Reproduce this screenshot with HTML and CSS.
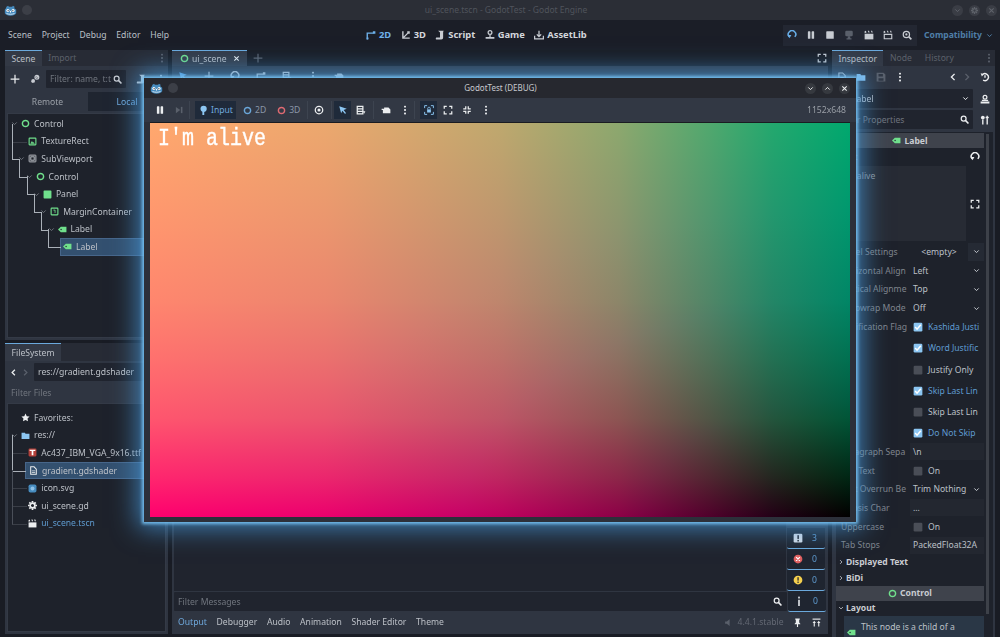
FILE: index.html
```html
<!DOCTYPE html>
<html lang="en">
<head>
    <meta charset="UTF-8">
    <title>ui_scene.tscn - GodotTest - Godot Engine</title>
    <link rel="stylesheet" href="styles.css">
</head>
<body>
<svg class="defs" width="0" height="0">
    <symbol id="godot" viewBox="0 0 16 16">
        <path fill="#478cbf" d="M3 3.500 5 2l1 1.500h4L11 2l2 1.500-.4 1.600L15 7v4.500c-1 1.500-3.500 3-7 3s-6-1.500-7-3V7l1.400-1.900z"/>
        <circle cx="4.800" cy="8" r="1.900" fill="#fff"/><circle cx="11.200" cy="8" r="1.900" fill="#fff"/>
        <circle cx="5.100" cy="8.200" r=".8" fill="#3a3f47"/><circle cx="10.900" cy="8.200" r=".8" fill="#3a3f47"/>
        <rect x="7.400" y="8.500" width="1.200" height="2" fill="#fff"/>
        <path fill="none" stroke="#fff" stroke-width=".9" d="M3 11.700c3 1.200 7 1.200 10 0"/>
    </symbol>
    <symbol id="ctrl" viewBox="0 0 16 16"><circle cx="8" cy="8" r="5.500" fill="none" stroke="currentColor" stroke-width="2.600"/></symbol>
    <symbol id="tex" viewBox="0 0 16 16"><rect x="2" y="2" width="12" height="12" rx="1" fill="none" stroke="currentColor" stroke-width="2"/><path fill="currentColor" d="M4 12l3-5 2 3 1-1 2 3z"/></symbol>
    <symbol id="subv" viewBox="0 0 16 16"><rect x="2" y="2" width="12" height="12" rx="1" fill="none" stroke="currentColor" stroke-width="1.600"/><rect x="5" y="5" width="6" height="6" fill="none" stroke="currentColor" stroke-width="1.600"/></symbol>
    <symbol id="panel" viewBox="0 0 16 16"><rect x="1" y="1" width="14" height="14" rx="1.500" fill="currentColor"/></symbol>
    <symbol id="margin" viewBox="0 0 16 16"><rect x="2" y="2" width="12" height="12" rx="1" fill="none" stroke="currentColor" stroke-width="2"/><path fill="none" stroke="currentColor" stroke-width="1.500" d="M6 5.500h3v5"/></symbol>
    <symbol id="tag" viewBox="0 0 16 16"><path fill="currentColor" d="M5 3h10v10H5L0 8z"/><circle cx="5.500" cy="8" r="1.300" fill="#232733"/></symbol>
    <symbol id="down" viewBox="0 0 16 16"><path fill="none" stroke="currentColor" stroke-width="2.200" d="M3 5.500l5 5 5-5"/></symbol>
    <symbol id="right" viewBox="0 0 16 16"><path fill="none" stroke="currentColor" stroke-width="2.200" d="M5.500 3l5 5-5 5"/></symbol>
    <symbol id="left" viewBox="0 0 16 16"><path fill="none" stroke="currentColor" stroke-width="2.200" d="M10.500 3l-5 5 5 5"/></symbol>
    <symbol id="up" viewBox="0 0 16 16"><path fill="none" stroke="currentColor" stroke-width="2.200" d="M3 10.500l5-5 5 5"/></symbol>
    <symbol id="x" viewBox="0 0 16 16"><path fill="none" stroke="currentColor" stroke-width="2.400" d="M3 3l10 10M13 3L3 13"/></symbol>
    <symbol id="plus" viewBox="0 0 16 16"><path fill="none" stroke="currentColor" stroke-width="2" d="M8 1v14M1 8h14"/></symbol>
    <symbol id="search" viewBox="0 0 16 16"><circle cx="6.500" cy="6.500" r="4.300" fill="none" stroke="currentColor" stroke-width="2.200"/><path stroke="currentColor" stroke-width="2.800" d="M10 10l5 5"/></symbol>
    <symbol id="dots" viewBox="0 0 16 16"><g fill="currentColor"><rect x="6.500" y="1" width="3" height="3" rx="1"/><rect x="6.500" y="6.500" width="3" height="3" rx="1"/><rect x="6.500" y="12" width="3" height="3" rx="1"/></g></symbol>
    <symbol id="link" viewBox="0 0 16 16"><path fill="none" stroke="currentColor" stroke-width="2.800" d="M3 13l3-3M10 6l3-3"/><circle cx="5" cy="11" r="3" fill="currentColor"/><circle cx="11" cy="5" r="3" fill="none" stroke="currentColor" stroke-width="2"/></symbol>
    <symbol id="scr" viewBox="0 0 16 16"><path fill="currentColor" d="M5 1h9c-1 1-1 2-1 3v8c0 2-1 3-3 3H2c-1 0-1-2 0-3h6V4c0-1-2-2-3-3z"/></symbol>
    <symbol id="fit" viewBox="0 0 16 16"><path fill="none" stroke="currentColor" stroke-width="2" d="M2 6V2h4M10 2h4v4M14 10v4h-4M6 14H2v-4"/></symbol>
    <symbol id="fit2" viewBox="0 0 16 16"><path fill="none" stroke="currentColor" stroke-width="2" d="M6 2v4H2M10 2v4h4M14 10h-4v4M2 10h4v4"/></symbol>
    <symbol id="reload" viewBox="0 0 16 16"><path fill="none" stroke="currentColor" stroke-width="2.400" d="M3.500 11a6 6 0 1 1 9 0"/><path fill="currentColor" d="M1 8h6l-3 5z"/></symbol>
    <symbol id="pause" viewBox="0 0 16 16"><rect x="3" y="2" width="4" height="12" rx="1" fill="currentColor"/><rect x="9" y="2" width="4" height="12" rx="1" fill="currentColor"/></symbol>
    <symbol id="step" viewBox="0 0 16 16"><path fill="currentColor" d="M3 3l7 5-7 5z"/><rect x="11" y="3" width="2.500" height="10" fill="currentColor"/></symbol>
    <symbol id="stop" viewBox="0 0 16 16"><rect x="2" y="2" width="12" height="12" rx="1" fill="currentColor"/></symbol>
    <symbol id="remote" viewBox="0 0 16 16"><rect x="2" y="1" width="12" height="9" rx="2" fill="currentColor"/><path fill="currentColor" d="M6 10h4v3h2v2H4v-2h2z"/></symbol>
    <symbol id="clap" viewBox="0 0 16 16"><path fill="currentColor" d="M1 6h14v9H1z"/><path fill="currentColor" d="M1 2l2-1 1 3-3 1zM6 1h2l1 3H7zM11 1h2l1 3h-2z"/></symbol>
    <symbol id="clapo" viewBox="0 0 16 16"><path fill="none" stroke="currentColor" stroke-width="1.800" d="M2 7h12v7H2z"/><path fill="currentColor" d="M1 2l2-1 1 3-3 1zM6 1h2l1 3H7zM11 1h2l1 3h-2z"/></symbol>
    <symbol id="movie" viewBox="0 0 16 16"><circle cx="7" cy="7" r="5" fill="none" stroke="currentColor" stroke-width="2"/><circle cx="7" cy="7" r="1.800" fill="currentColor"/><path stroke="currentColor" stroke-width="2.500" d="M11 11l4 4"/></symbol>
    <symbol id="game" viewBox="0 0 16 16"><circle cx="8" cy="4" r="3" fill="none" stroke="currentColor" stroke-width="2"/><path fill="currentColor" d="M7 7h2v4h6v3H1v-3h6z"/></symbol>
    <symbol id="asset" viewBox="0 0 16 16"><path fill="none" stroke="currentColor" stroke-width="2" d="M1 9v5h14V9M8 1v9M4.500 7L8 10.500 11.500 7"/></symbol>
    <symbol id="two" viewBox="0 0 16 16"><path fill="none" stroke="currentColor" stroke-width="2.200" d="M2 15V5h10"/><rect x="11" y="2" width="4" height="4" fill="currentColor"/><rect x="1" y="12" width="3" height="3" fill="currentColor"/></symbol>
    <symbol id="three" viewBox="0 0 16 16"><path fill="none" stroke="currentColor" stroke-width="2.200" d="M3 2v11h11M3 13l8-8"/><rect x="10" y="2" width="4" height="4" fill="currentColor"/></symbol>
    <symbol id="star" viewBox="0 0 16 16"><path fill="currentColor" d="M8 1l2.200 4.600 5 .7-3.600 3.500.9 5L8 12.400 3.500 14.800l.9-5L.8 6.300l5-.7z"/></symbol>
    <symbol id="folder" viewBox="0 0 16 16"><path fill="currentColor" d="M1 3h6l1 2h7v9H1z"/></symbol>
    <symbol id="file" viewBox="0 0 16 16"><path fill="none" stroke="currentColor" stroke-width="1.800" d="M3 1.500h6l4 4v9H3z"/><path fill="currentColor" d="M5 8h6v1.500H5zM5 11h6v1.500H5z"/></symbol>
    <symbol id="gear" viewBox="0 0 16 16"><circle cx="8" cy="8" r="4.200" fill="none" stroke="currentColor" stroke-width="3"/><path stroke="currentColor" stroke-width="3" d="M8 0v3M8 13v3M0 8h3M13 8h3M2.300 2.300l2 2M11.700 11.700l2 2M13.700 2.300l-2 2M4.300 11.700l-2 2"/></symbol>
    <symbol id="font" viewBox="0 0 16 16"><rect x="1" y="1" width="14" height="14" rx="2" fill="#b3403a"/><path fill="#fff" d="M3 3h10v2.500H9.500V13h-3V5.500H3z"/></symbol>
    <symbol id="svgi" viewBox="0 0 16 16"><rect x="1" y="1" width="14" height="14" rx="3" fill="#478cbf"/><circle cx="8" cy="8" r="3.500" fill="#8ec1e8"/></symbol>
    <symbol id="save" viewBox="0 0 16 16"><path fill="currentColor" d="M1 1h11l3 3v11H1zM4 3v4h7V3zM4 10v4h8v-4z"/></symbol>
    <symbol id="hist" viewBox="0 0 16 16"><path fill="none" stroke="currentColor" stroke-width="2.200" d="M3.500 5a5.500 5.500 0 1 1 1.500 8M8 5v4"/><path fill="currentColor" d="M1 2l5 1-3 4z"/></symbol>
    <symbol id="docs" viewBox="0 0 16 16"><circle cx="8" cy="5" r="3" fill="none" stroke="currentColor" stroke-width="2"/><path fill="currentColor" d="M3 9h10v2H3zM1 12h14v3H1z"/></symbol>
    <symbol id="tools" viewBox="0 0 16 16"><path fill="none" stroke="currentColor" stroke-width="2.200" d="M4.500 7v8M11.500 1v14"/><circle cx="4.500" cy="4" r="3" fill="currentColor"/><path stroke="currentColor" stroke-width="2.200" d="M9 4h5"/></symbol>
    <symbol id="check" viewBox="0 0 16 16"><rect x="1" y="1" width="14" height="14" rx="2" fill="#8cc6f2"/><path fill="none" stroke="#fff" stroke-width="2.400" d="M3.500 8l3 3.500 6-7"/></symbol>
    <symbol id="box" viewBox="0 0 16 16"><rect x="1" y="1" width="14" height="14" rx="2" fill="#4a4e57"/></symbol>
    <symbol id="eye" viewBox="0 0 16 16"><circle cx="8" cy="8" r="6" fill="none" stroke="currentColor" stroke-width="2"/><circle cx="8" cy="8" r="2.500" fill="currentColor"/></symbol>
    <symbol id="cursor" viewBox="0 0 16 16"><path fill="currentColor" d="M2 2l12 4-5 2 4 5-2 1-4-5-2 4z"/></symbol>
    <symbol id="list" viewBox="0 0 16 16"><path fill="none" stroke="currentColor" stroke-width="2" d="M2 2h9v12H2zM2 6h9M2 10h9"/><path fill="currentColor" d="M11 10h4l-2 4z"/></symbol>
    <symbol id="cam" viewBox="0 0 16 16"><path fill="currentColor" d="M5 4h7l3 3v6H3V8H1V6h4z"/></symbol>
    <symbol id="lock" viewBox="0 0 16 16"><path fill="none" stroke="currentColor" stroke-width="1.500" d="M1 5V1h4M11 1h4v4M15 11v4h-4M5 15H1v-4"/><rect x="5" y="7" width="6" height="5" fill="currentColor"/><path fill="none" stroke="currentColor" stroke-width="1.300" d="M6 7V5c0-2 4-2 4 0v2"/></symbol>
    <symbol id="input" viewBox="0 0 16 16"><circle cx="9" cy="6" r="5" fill="currentColor"/><path fill="currentColor" d="M7 10h3v6H7z"/></symbol>
    <symbol id="warnb" viewBox="0 0 16 16"><rect x="1" y="1" width="14" height="14" rx="2" fill="#d5dde8"/><rect x="7" y="3.500" width="2.500" height="6" fill="#2a2e37"/><rect x="7" y="11" width="2.500" height="2.500" fill="#2a2e37"/></symbol>
    <symbol id="err" viewBox="0 0 16 16"><circle cx="8" cy="8" r="7" fill="#e06060"/><path stroke="#fff" stroke-width="2" d="M5 5l6 6M11 5l-6 6"/></symbol>
    <symbol id="warn" viewBox="0 0 16 16"><circle cx="8" cy="8" r="7" fill="#f5d04e"/><rect x="7" y="3.500" width="2.200" height="5.500" fill="#333"/><rect x="7" y="10.500" width="2.200" height="2.200" fill="#333"/></symbol>
    <symbol id="info" viewBox="0 0 16 16"><rect x="6.500" y="1" width="3" height="3" fill="currentColor"/><path fill="currentColor" d="M6.500 6h3v10h-3z"/></symbol>
    <symbol id="pin" viewBox="0 0 16 16"><path fill="currentColor" d="M4 1h8v2h-1v5l2 2v1H9v5H7v-5H3v-1l2-2V3H4z"/></symbol>
    <symbol id="expand" viewBox="0 0 16 16"><path fill="currentColor" d="M1 1h14v2H1z"/><path fill="currentColor" d="M4 5l3 4H5v6H3V9H1zM12 5l3 4h-2v6h-2V9H9z"/></symbol>
    <symbol id="speaker" viewBox="0 0 16 16"><path fill="currentColor" d="M2 6h3l5-4v12l-5-4H2z"/></symbol>
</svg>

<div class="titlebar">
    <svg class="logo"><use href="#godot"/></svg>
    <span class="pin-dot"></span>
    <span class="titlebar-text">ui_scene.tscn - GodotTest - Godot Engine</span>
    <div class="win-btns">
        <span class="win-btn"><svg class="ic-xs"><use href="#down"/></svg></span>
        <span class="win-btn"><svg class="ic-xs"><use href="#gear"/></svg></span>
        <span class="win-btn"><svg class="ic-xs"><use href="#x"/></svg></span>
    </div>
</div>

<div class="menubar">
    <div class="menu">
        <span>Scene</span><span>Project</span><span>Debug</span><span>Editor</span><span>Help</span>
    </div>
    <div class="screens">
        <span class="screen active"><svg class="ic"><use href="#two"/></svg>2D</span>
        <span class="screen"><svg class="ic"><use href="#three"/></svg>3D</span>
        <span class="screen"><svg class="ic"><use href="#scr"/></svg>Script</span>
        <span class="screen"><svg class="ic"><use href="#game"/></svg>Game</span>
        <span class="screen"><svg class="ic"><use href="#asset"/></svg>AssetLib</span>
    </div>
    <div class="runbar">
        <svg class="ic blue"><use href="#reload"/></svg>
        <svg class="ic"><use href="#pause"/></svg>
        <svg class="ic"><use href="#stop"/></svg>
        <svg class="ic off"><use href="#remote"/></svg>
        <svg class="ic"><use href="#clap"/></svg>
        <svg class="ic"><use href="#clapo"/></svg>
        <svg class="ic"><use href="#movie"/></svg>
    </div>
    <span class="renderer">Compatibility<svg class="ic-xs"><use href="#down"/></svg></span>
</div>

<div class="main">
    <div class="dock">
        <div class="tabs">
            <span class="tab active">Scene</span><span class="tab">Import</span>
            <svg class="ic tabs-end off"><use href="#dots"/></svg>
        </div>
        <div class="dock-body scene-dock">
            <div class="scene-tools">
                <svg class="ic white"><use href="#plus"/></svg>
                <svg class="ic"><use href="#link"/></svg>
                <div class="field scene-filter"><span class="hint">Filter: name, t:t</span><svg class="ic-s"><use href="#search"/></svg></div>
                <svg class="ic"><use href="#scr"/></svg>
                <svg class="ic"><use href="#dots"/></svg>
            </div>
            <div class="remote-local">
                <span>Remote</span><span class="on">Local</span>
            </div>
            <div class="tree">
                <div class="row d0"><svg class="arrow"><use href="#down"/></svg><svg class="ic-t green"><use href="#ctrl"/></svg>Control</div>
                <div class="row d1 stub trunk"><span class="arrow"></span><svg class="ic-t green"><use href="#tex"/></svg>TextureRect</div>
                <div class="row d1 elbow"><svg class="arrow"><use href="#down"/></svg><svg class="ic-t"><use href="#subv"/></svg>SubViewport</div>
                <div class="row d2 elbow"><svg class="arrow"><use href="#down"/></svg><svg class="ic-t green"><use href="#ctrl"/></svg>Control</div>
                <div class="row d3 elbow"><svg class="arrow"><use href="#down"/></svg><svg class="ic-t green"><use href="#panel"/></svg>Panel</div>
                <div class="row d4 elbow"><svg class="arrow"><use href="#down"/></svg><svg class="ic-t green"><use href="#margin"/></svg>MarginContainer</div>
                <div class="row d5 elbow"><svg class="arrow"><use href="#down"/></svg><svg class="ic-t green"><use href="#tag"/></svg>Label</div>
                <div class="row d6 elbow sel"><svg class="ic-t green"><use href="#tag"/></svg>Label</div>
            </div>
        </div>
        <div class="tabs fs-tabs">
            <span class="tab active">FileSystem</span>
        </div>
        <div class="dock-body fs-dock">
            <div class="path-row">
                <svg class="ic-s white"><use href="#left"/></svg>
                <svg class="ic-s off"><use href="#right"/></svg>
                <div class="field path">res://gradient.gdshader</div>
            </div>
            <div class="fs-filter"><span class="hint">Filter Files</span><svg class="ic-s"><use href="#search"/></svg></div>
            <div class="tree fs-tree">
                <div class="row d0"><span class="arrow"></span><svg class="ic-t white"><use href="#star"/></svg>Favorites:</div>
                <div class="row d0"><svg class="arrow"><use href="#down"/></svg><svg class="ic-t sky"><use href="#folder"/></svg>res://</div>
                <div class="row d1 stub trunk"><span class="arrow"></span><svg class="ic-t"><use href="#font"/></svg>Ac437_IBM_VGA_9x16.ttf</div>
                <div class="row d1 elbow selfs"><span class="arrow"></span><svg class="ic-t white"><use href="#file"/></svg>gradient.gdshader</div>
                <div class="row d1 stub"><span class="arrow"></span><svg class="ic-t"><use href="#svgi"/></svg>icon.svg</div>
                <div class="row d1 stub"><span class="arrow"></span><svg class="ic-t white"><use href="#gear"/></svg>ui_scene.gd</div>
                <div class="row d1 stub link-row"><span class="arrow"></span><svg class="ic-t white"><use href="#clap"/></svg>ui_scene.tscn</div>
            </div>
        </div>
    </div>

    <div class="center">
        <div class="tabs center-tabs">
            <span class="tab active doc-tab"><svg class="ic-t green"><use href="#ctrl"/></svg>ui_scene<svg class="ic-xs white"><use href="#x"/></svg></span>
            <svg class="ic off add-tab"><use href="#plus"/></svg>
            <svg class="ic tabs-end"><use href="#fit"/></svg>
        </div>
        <div class="viewport-tools">
            <svg class="ic blue"><use href="#cursor"/></svg>
            <svg class="ic"><use href="#plus"/></svg>
            <svg class="ic"><use href="#reload"/></svg>
            <svg class="ic"><use href="#two"/></svg>
            <svg class="ic"><use href="#list"/></svg>
            <svg class="ic"><use href="#dots"/></svg>
            <svg class="ic"><use href="#cam"/></svg>
        </div>
        <div class="viewport"></div>
        <div class="bottom">
            <div class="output">
                <div class="log"></div>
                <div class="badges">
                    <span class="badge"><svg class="ic"><use href="#warnb"/></svg>3</span>
                    <span class="badge"><svg class="ic"><use href="#err"/></svg>0</span>
                    <span class="badge"><svg class="ic"><use href="#warn"/></svg>0</span>
                </div>
            </div>
            <div class="msg-row">
                <div class="field msg-filter"><span class="hint">Filter Messages</span><svg class="ic-s white"><use href="#search"/></svg></div>
                <span class="badge"><svg class="ic"><use href="#info"/></svg>0</span>
            </div>
            <div class="bottom-tabs">
                <span class="on">Output</span><span>Debugger</span><span>Audio</span><span>Animation</span><span>Shader Editor</span><span>Theme</span>
                <span class="version"><svg class="ic-s off"><use href="#speaker"/></svg>4.4.1.stable</span>
                <svg class="ic-s white"><use href="#pin"/></svg>
                <svg class="ic-s white"><use href="#expand"/></svg>
            </div>
        </div>
    </div>

    <div class="dock right-dock">
        <div class="tabs">
            <span class="tab active">Inspector</span><span class="tab">Node</span><span class="tab">History</span>
            <svg class="ic tabs-end off"><use href="#dots"/></svg>
        </div>
        <div class="dock-body inspector">
            <div class="insp-tools">
                <svg class="ic"><use href="#file"/></svg>
                <svg class="ic sky"><use href="#folder"/></svg>
                <svg class="ic off"><use href="#save"/></svg>
                <svg class="ic white"><use href="#dots"/></svg>
                <span class="nav">
                    <svg class="ic white"><use href="#left"/></svg>
                    <svg class="ic off"><use href="#right"/></svg>
                </span>
                <svg class="ic white"><use href="#hist"/></svg>
            </div>
            <div class="insp-line">
                <div class="field insp-field"><svg class="ic-t green"><use href="#tag"/></svg><span>Label</span><svg class="ic-xs white"><use href="#down"/></svg></div>
                <svg class="ic white"><use href="#docs"/></svg>
            </div>
            <div class="insp-line">
                <div class="field insp-field"><span class="hint">Filter Properties</span><svg class="ic-s white"><use href="#search"/></svg></div>
                <svg class="ic white"><use href="#tools"/></svg>
            </div>
            <div class="props">
                <div class="props-list">
                    <div class="class-head"><svg class="ic-t green"><use href="#tag"/></svg>Label</div>
                    <div class="prop-text">
                        <div class="prop-text-head"><span>Text</span><svg class="ic white"><use href="#reload"/></svg></div>
                        <div class="prop-text-body"><div class="textarea">I'm alive</div><svg class="ic white"><use href="#fit"/></svg></div>
                    </div>
                    <div class="prop"><span class="key">Label Settings</span><span class="val res">&lt;empty&gt;</span><span class="res-arrow"><svg class="ic-xs"><use href="#down"/></svg></span></div>
                    <div class="prop"><span class="key">Horizontal Align</span><span class="val">Left<svg class="ic-xs"><use href="#down"/></svg></span></div>
                    <div class="prop"><span class="key">Vertical Alignme</span><span class="val">Top<svg class="ic-xs"><use href="#down"/></svg></span></div>
                    <div class="prop"><span class="key">Autowrap Mode</span><span class="val">Off<svg class="ic-xs"><use href="#down"/></svg></span></div>
                    <div class="flags">
                        <div class="prop flag"><span class="key">Justification Flag</span><span class="val on"><svg class="ic-c"><use href="#check"/></svg>Kashida Justi</span></div>
                        <div class="prop flag"><span class="key"></span><span class="val on"><svg class="ic-c"><use href="#check"/></svg>Word Justific</span></div>
                        <div class="prop flag"><span class="key"></span><span class="val"><svg class="ic-c"><use href="#box"/></svg>Justify Only</span></div>
                        <div class="prop flag"><span class="key"></span><span class="val on"><svg class="ic-c"><use href="#check"/></svg>Skip Last Lin</span></div>
                        <div class="prop flag"><span class="key"></span><span class="val"><svg class="ic-c"><use href="#box"/></svg>Skip Last Lin</span></div>
                        <div class="prop flag"><span class="key"></span><span class="val on"><svg class="ic-c"><use href="#check"/></svg>Do Not Skip</span></div>
                    </div>
                    <div class="prop"><span class="key">Paragraph Sepa</span><span class="val inputish">\n</span></div>
                    <div class="prop"><span class="key">Clip Text</span><span class="val"><svg class="ic-c"><use href="#box"/></svg>On</span></div>
                    <div class="prop"><span class="key">Text Overrun Be</span><span class="val">Trim Nothing<svg class="ic-xs"><use href="#down"/></svg></span></div>
                    <div class="prop"><span class="key">Ellipsis Char</span><span class="val inputish">...</span></div>
                    <div class="prop"><span class="key">Uppercase</span><span class="val"><svg class="ic-c"><use href="#box"/></svg>On</span></div>
                    <div class="prop"><span class="key">Tab Stops</span><span class="val inputish">PackedFloat32A</span></div>
                    <div class="section"><svg class="ic-a"><use href="#right"/></svg>Displayed Text</div>
                    <div class="section"><svg class="ic-a"><use href="#right"/></svg>BiDi</div>
                    <div class="class-head"><svg class="ic-t green"><use href="#ctrl"/></svg>Control</div>
                    <div class="section"><svg class="ic-a"><use href="#down"/></svg>Layout</div>
                    <div class="note"><svg class="ic-t green"><use href="#tag"/></svg>This node is a child of a</div>
                </div>
                <div class="scroll"><div class="thumb"></div></div>
            </div>
        </div>
    </div>
</div>

<!-- running game window, floats over the editor -->
<div class="game-win">
    <div class="game-title">
        <svg class="logo"><use href="#godot"/></svg>
        <span class="pin-dot"></span>
        <span class="game-name">GodotTest (DEBUG)</span>
        <div class="win-btns">
            <span class="win-btn"><svg class="ic-xs"><use href="#down"/></svg></span>
            <span class="win-btn"><svg class="ic-xs"><use href="#up"/></svg></span>
            <span class="win-btn"><svg class="ic-xs"><use href="#x"/></svg></span>
        </div>
    </div>
    <div class="game-tools">
        <div class="tgroup g-run">
            <svg class="ic white"><use href="#pause"/></svg>
            <svg class="ic off"><use href="#step"/></svg>
        </div>
        <div class="tgroup g-input">
            <span class="gbtn pressed input-btn"><svg class="ic sky"><use href="#input"/></svg>Input</span>
            <span class="gbtn"><svg class="ic-s cblue"><use href="#ctrl"/></svg>2D</span>
            <span class="gbtn g3d"><svg class="ic-s cred"><use href="#ctrl"/></svg>3D</span>
        </div>
        <div class="tgroup g-eye">
            <svg class="ic white"><use href="#eye"/></svg>
        </div>
        <div class="tgroup g-select">
            <span class="gbtn pressed square"><svg class="ic sky"><use href="#cursor"/></svg></span>
            <svg class="ic white"><use href="#list"/></svg>
        </div>
        <div class="tgroup g-cam">
            <svg class="ic white"><use href="#cam"/></svg>
            <svg class="ic white"><use href="#dots"/></svg>
        </div>
        <div class="tgroup g-view">
            <span class="gbtn pressed square"><svg class="ic sky"><use href="#lock"/></svg></span>
            <svg class="ic white"><use href="#fit"/></svg>
            <svg class="ic white"><use href="#fit2"/></svg>
            <svg class="ic white"><use href="#dots"/></svg>
        </div>
        <span class="res-label">1152x648</span>
    </div>
    <div class="game-view"><span class="alive">I'm alive</span></div>
</div>
</body>
</html>
```

FILE: styles.css
```css
* {
    box-sizing: border-box;
}

html, body {
    margin: 0;
    height: 637px;
    overflow: hidden;
}

body {
    background-color: #191c24;
    color: #bcc0c7;
    font-family: "Noto Sans", sans-serif;
    font-size: 8.6px;
    line-height: 12px;
    filter: blur(0.35px);
}

.defs {
    position: absolute;
}

svg {
    flex: none;
    color: #c8ccd2;
}

.ic { width: 10px; height: 10px; }
.ic-s { width: 9px; height: 9px; }
.ic-xs { width: 7px; height: 7px; }
.ic-t { width: 9px; height: 9px; }
.ic-a { width: 6px; height: 6px; }
.ic-c { width: 10px; height: 10px; }

.white { color: #eceef0; }
.off { color: #5a606b; }
.blue { color: #68aee8; }
.sky { color: #8cc6f2; }
.green { color: #70e08c; }
.cblue { color: #6aa6d8; }
.cred { color: #e06a72; }

.hint { color: #70757e; }

/* window title */
.titlebar {
    height: 20px;
    background-color: #2b2e36;
    display: flex;
    align-items: center;
    padding: 0 3px 0 4px;
}

.logo {
    width: 13px;
    height: 13px;
}

.pin-dot {
    width: 10px;
    height: 10px;
    border-radius: 50%;
    background-color: #3c3f47;
    margin-left: 5px;
}

.titlebar-text {
    flex: 1;
    text-align: center;
    color: #50545c;
    font-size: 8.5px;
    padding-left: 28px;
}

.win-btns {
    display: flex;
    gap: 6px;
}

.win-btn {
    width: 11px;
    height: 11px;
    border-radius: 50%;
    background-color: #3a3d45;
    display: flex;
    align-items: center;
    justify-content: center;
}

.titlebar .win-btn svg {
    color: #5f636b;
}

/* main menu */
.menubar {
    height: 30px;
    background-color: #1b1e27;
    display: flex;
    align-items: center;
    padding-left: 8px;
    padding-right: 7px;
}

.menu {
    display: flex;
    gap: 9.800px;
    width: 358px;
}

.screens {
    display: flex;
    gap: 9.400px;
    font-size: 9.4px;
    font-weight: 700;
    color: #d4d7dc;
    width: 417px;
}

.screen {
    display: flex;
    align-items: center;
    gap: 3px;
}

.screen.active,
.screen.active svg {
    color: #6fb1ea;
}

.runbar {
    width: 134px;
    height: 21px;
    background-color: #232732;
    display: flex;
    align-items: center;
    justify-content: space-between;
    padding: 0 5px 0 4px;
}

.renderer {
    flex: 1;
    display: flex;
    align-items: center;
    justify-content: space-between;
    margin-left: 7px;
    font-weight: 700;
    color: #4f7fa8;
}

.renderer svg {
    color: #4f7fa8;
}

/* docks */
.main {
    height: 587px;
    padding: 0 5px 3px;
    display: flex;
    gap: 4px;
}

.dock {
    width: 163px;
    display: flex;
    flex-direction: column;
}

.center {
    flex: 1;
    display: flex;
    flex-direction: column;
}

.tabs {
    height: 16px;
    background-color: #272b35;
    display: flex;
    align-items: stretch;
    flex: none;
}

.tab {
    padding: 0 6.500px;
    color: #5c616b;
    display: flex;
    align-items: center;
}

.tab.active {
    background-color: #333945;
    border-top: 1px solid #6ba9dc;
    color: #bcc0c7;
}

.tabs-end {
    margin-left: auto;
    align-self: center;
    margin-right: 1px;
}

.dock-body {
    background-color: #2f3541;
    padding: 2px;
}

.scene-dock {
    height: 274px;
    display: flex;
    flex-direction: column;
}

.scene-tools {
    height: 22px;
    padding-left: 3px;
    display: flex;
    align-items: center;
    gap: 10px;
    flex: none;
}

.field {
    background-color: #20242e;
    border-radius: 1px;
    display: flex;
    align-items: center;
}

.scene-filter {
    width: 81px;
    height: 18px;
    margin-left: -4px;
    padding: 0 4px;
    justify-content: space-between;
    overflow: hidden;
    white-space: nowrap;
}

.remote-local {
    display: flex;
    height: 19px;
    flex: none;
    margin-top: 2px;
}

.remote-local span {
    width: 81px;
    display: flex;
    align-items: center;
    justify-content: center;
    color: #9ba0a8;
}

.remote-local .on {
    width: 78px;
    background-color: #1f2530;
    color: #6fa8dc;
}

.tree {
    flex: 1;
    background-color: #1e222b;
    border: 1px solid #343a46;
    margin-top: 2px;
    padding-top: 1px;
}

.row {
    height: 17.600px;
    display: flex;
    align-items: center;
    gap: 4px;
    white-space: nowrap;
    position: relative;
}

.arrow {
    width: 7px;
    height: 7px;
    color: #6d727b;
    margin-right: -1px;
    flex: none;
}

.d0 { padding-left: 3px; }
.d1 { padding-left: 10.300px; }
.d2 { padding-left: 17.600px; }
.d3 { padding-left: 24.900px; }
.d4 { padding-left: 32.200px; }
.d5 { padding-left: 39.500px; }
.d6 { padding-left: 54px; }

/* tree guide lines */
.elbow::before,
.stub::before {
    content: "";
    position: absolute;
    width: 7px;
    left: 4px;
    top: -9px;
    height: 18px;
    border-left: 1px solid #aab0b8;
    border-bottom: 1px solid #aab0b8;
}

.stub::before {
    border-left-color: #4a4f59;
    border-bottom-color: #3a3e47;
    width: 14px;
}

.trunk::before {
    border-left-color: #aab0b8;
}

.d2::before { left: 11.300px; }
.d3::before { left: 18.600px; }
.d4::before { left: 25.900px; }
.d5::before { left: 33.200px; }

.sel, .selfs {
    background-color: #33506f;
    box-shadow: inset 0 0 0 1px #47668a;
}

.d6.sel {
    margin-left: 52px;
    padding-left: 3px;
}

.d6.sel::before {
    left: -12px;
    width: 12px;
}

.selfs {
    margin-left: 17px;
    padding-left: 4px;
}

.selfs .arrow {
    display: none;
}

.selfs::before {
    left: -13px;
    width: 13px;
}

.link-row {
    color: #5f9bd0;
}

.fs-tabs {
    margin-top: 3px;
    height: 18px;
}

.fs-dock {
    flex: 1;
    display: flex;
    flex-direction: column;
}

.path-row {
    height: 18px;
    display: flex;
    align-items: center;
    gap: 3px;
    padding-left: 2px;
    flex: none;
}

.path {
    flex: 1;
    height: 18px;
    padding-left: 4px;
    margin-left: 1px;
}

.fs-filter {
    height: 19px;
    margin-top: 2px;
    padding: 0 4px;
    display: flex;
    align-items: center;
    justify-content: space-between;
    flex: none;
}

.fs-tree {
    margin-top: 1px;
    padding-top: 5px;
}

.center-tabs {
    background: none;
}

.doc-tab {
    width: 75px;
    gap: 3px;
    padding: 0 7px 0 8px;
}

.doc-tab svg:last-child {
    margin-left: auto;
}

.add-tab {
    align-self: center;
    margin-left: 6px;
}

.viewport-tools {
    height: 20px;
    background-color: #2f3541;
    display: flex;
    align-items: center;
    gap: 16px;
    padding-left: 6px;
    flex: none;
}

.viewport {
    flex: 1;
    background-color: #2a2d34;
}

.bottom {
    height: 140px;
    background-color: #2f3541;
    display: flex;
    flex-direction: column;
    padding: 2px;
}

.output {
    flex: 1;
    display: flex;
}

.log {
    flex: 1;
    background-color: #20242e;
}

.badges {
    width: 40px;
    padding-left: 1px;
    display: flex;
    flex-direction: column;
    justify-content: flex-end;
}

.badge {
    width: 38px;
    height: 21px;
    border-bottom: 1px solid #6ba9dc;
    border-radius: 0 0 2px 2px;
    background-color: #1f2530;
    color: #5f9bd0;
    display: flex;
    align-items: center;
    gap: 9px;
    padding-left: 6px;
    flex: none;
}

.msg-row {
    height: 21px;
    display: flex;
    gap: 1px;
    flex: none;
}

.msg-filter {
    flex: 1;
    height: 19px;
    margin-top: 1px;
    padding: 0 5px 0 4px;
    justify-content: space-between;
}

.bottom-tabs {
    height: 20px;
    display: flex;
    align-items: center;
    gap: 9.700px;
    padding: 0 5px 0 4px;
    flex: none;
}

.bottom-tabs .on {
    color: #6fa8dc;
}

.version {
    margin-left: auto;
    color: #636873;
    display: flex;
    align-items: center;
    gap: 5px;
}

/* inspector */
.inspector {
    flex: 1;
    display: flex;
    flex-direction: column;
    padding: 0 2px 0 4px;
}

.insp-tools {
    height: 22px;
    display: flex;
    align-items: center;
    gap: 9.300px;
    padding: 0 3px 0 1px;
    flex: none;
}

.nav {
    margin-left: auto;
    display: flex;
    gap: 4px;
    margin-right: -1px;
}

.insp-line {
    height: 21px;
    display: flex;
    align-items: center;
    gap: 7px;
    flex: none;
}

.insp-field {
    width: 137px;
    height: 19px;
    padding: 0 4px;
    gap: 3px;
}

.insp-field :last-child {
    margin-left: auto;
}

.props {
    flex: 1;
    display: flex;
    background-color: #1e222b;
    margin-top: 2px;
    padding: 1px 3px 0 0;
    overflow: hidden;
}

.props-list {
    width: 148px;
}

.class-head {
    height: 15px;
    background-color: #3f434c;
    font-weight: 700;
    color: #c9ccd1;
    display: flex;
    align-items: center;
    justify-content: center;
    gap: 3px;
}

.prop-text {
    height: 94.650px;
}

.prop-text-head {
    height: 18px;
    display: flex;
    align-items: center;
    justify-content: space-between;
    padding: 0 4px 0 5px;
    color: #8a8f97;
}

.prop-text-body {
    display: flex;
    align-items: center;
    gap: 4px;
    padding-left: 2px;
}

.textarea {
    width: 128px;
    height: 75px;
    background-color: #272b34;
    padding: 4px 0 0 4px;
    color: #8f949c;
}

.prop {
    height: 18.700px;
    display: flex;
    align-items: center;
}

.flags {
    margin: -1.100px 0 -1.500px;
}

.flag {
    height: 21.300px;
}

.key {
    width: 74px;
    padding-left: 5px;
    color: #80858d;
    white-space: nowrap;
    overflow: hidden;
}

.val {
    flex: 1;
    height: 100%;
    display: flex;
    align-items: center;
    gap: 5px;
    padding-left: 3px;
    white-space: nowrap;
}

.val > .ic-xs {
    margin-left: auto;
    margin-right: 4px;
}

.val.on {
    color: #5f9bd0;
}

.inputish {
    background-color: #232730;
    margin: 1px 0;
    height: 17px;
}

.res {
    justify-content: center;
    padding-left: 0;
}

.res-arrow {
    width: 16px;
    height: 100%;
    background-color: #252a34;
    display: flex;
    align-items: center;
    justify-content: center;
}

.section {
    height: 15.500px;
    display: flex;
    align-items: center;
    gap: 2px;
    padding-left: 2px;
    font-weight: 700;
    color: #c9ccd1;
}

.note {
    height: 30px;
    margin-left: 8px;
    background-color: #2a3746;
    display: flex;
    gap: 5px;
    padding: 5px 0 0 3px;
    white-space: nowrap;
    overflow: hidden;
}

.note svg {
    margin-top: 7px;
}

.scroll {
    flex: 1;
    padding: 1px 1px 0 2px;
}

.thumb {
    width: 3px;
    height: 480px;
    background-color: #3d4149;
}

/* game window */
.game-win {
    position: absolute;
    left: 144px;
    top: 78px;
    width: 712px;
    height: 444px;
    background-color: #2c303a;
    display: flex;
    flex-direction: column;
    box-shadow: 0 0 3px 2px rgba(120, 195, 245, 0.9), 0 0 24px 6px rgba(70, 150, 215, 0.8);
}

.game-title {
    height: 20px;
    background-color: #26282f;
    display: flex;
    align-items: center;
    padding: 0 6px;
    flex: none;
}

.game-name {
    flex: 1;
    text-align: center;
    font-size: 8px;
    padding-left: 18px;
    color: #c6c9ce;
}

.game-title .win-btn {
    background-color: #36393f;
}

.game-title .win-btn svg {
    color: #eceef0;
}

.game-tools {
    height: 24px;
    background-color: #323844;
    display: flex;
    align-items: center;
    padding: 0 10px 0 11px;
    flex: none;
}

.tgroup {
    height: 18px;
    display: flex;
    align-items: center;
    border-right: 1px solid #3d4450;
}

.g-run { gap: 9px; padding-right: 5px; }
.g-input { gap: 7px; padding: 0 7px 0 5px; }
.g-eye { padding: 0 7px 0 6px; }
.g-select { gap: 5px; padding: 0 7px 0 2px; }
.g-cam { gap: 9px; padding: 0 4px 0 7px; }
.g-view { gap: 9px; padding-left: 5px; border-right: none; }

.g-view .square {
    margin-right: -3px;
}

.gbtn {
    height: 18px;
    display: flex;
    align-items: center;
    gap: 3px;
    color: #8b97a8;
}

.g3d {
    margin-left: 4px;
}

.pressed {
    background-color: #1f2a3a;
    color: #6fa8dc;
}

.input-btn {
    width: 41px;
    padding-left: 3px;
}

.square {
    width: 17px;
    justify-content: center;
}

.res-label {
    margin-left: auto;
    color: #9a9fa7;
}

.game-view {
    flex: 1;
    margin: 0 6px 5px;
    padding: 5px 0 0 8px;
    border-top: 1px solid #1a1c21;
    color: #fff;
    background-color: #000;
    background-image:
        radial-gradient(farthest-corner at 100% 100%, #000, #000014 7%, #000042 21%, #000066 39%, #00006e 55%),
        linear-gradient(to bottom, #00a800, #009600 25%, #008600 45%, #007000 60%, #005500 75%, #002600 90%, #000),
        linear-gradient(to right, #f00, #eb0000 25%, #be0000 50%, #8c0000 67%, #500000 80%, #230000 89%, #000);
    background-blend-mode: screen;
}

.alive {
    display: inline-block;
    font-family: "Liberation Mono", monospace;
    font-size: 20px;
    line-height: 20px;
    font-weight: 400;
    -webkit-text-stroke: 0.3px #fff;
    transform: scaleY(1.15);
    transform-origin: top left;
}
```
